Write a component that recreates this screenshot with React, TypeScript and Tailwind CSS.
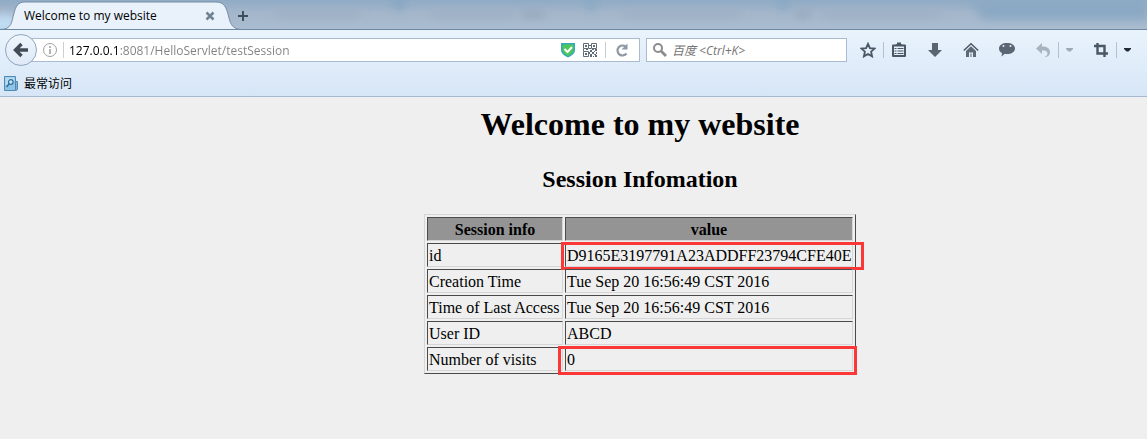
import { useState } from "react";
import type { ReactNode } from "react";

const sessionRows = [
  { label: "id", value: "D9165E3197791A23ADDFF23794CFE40E", mark: "wide" },
  { label: "Creation Time", value: "Tue Sep 20 16:56:49 CST 2016" },
  { label: "Time of Last Access", value: "Tue Sep 20 16:56:49 CST 2016" },
  { label: "User ID", value: "ABCD" },
  { label: "Number of visits", value: "0", mark: "cell" },
];

function Icon({ children }: { children: ReactNode }) {
  return (
    <svg viewBox="0 0 16 16" className="h-4 w-4 shrink-0" aria-hidden="true">
      {children}
    </svg>
  );
}

function ToolButton({
  label,
  children,
}: {
  label: string;
  children: ReactNode;
}) {
  return (
    <button type="button" aria-label={label} className="shrink-0">
      {children}
    </button>
  );
}

function Separator() {
  return <span className="h-4 w-px shrink-0 bg-[#b4c1ce]" />;
}

function Caret() {
  return (
    <svg viewBox="0 0 7 4" className="h-1 w-[7px]" aria-hidden="true">
      <path d="M0 0h7v1L4.5 3.5h-2L0 1z" fill="currentColor" />
    </svg>
  );
}

function TabStrip() {
  return (
    <div className="relative flex h-[30px] items-center overflow-hidden border-b border-[#6f879f] bg-linear-to-b from-[#8fabc5] via-[#a2b5ca] via-40% to-[#abbdd0]">
      <svg
        className="absolute inset-0 h-full w-full"
        aria-hidden="true"
      >
        <defs>
          <filter id="haze" x="-30%" y="-60%" width="160%" height="220%">
            <feGaussianBlur stdDeviation="4" />
          </filter>
        </defs>
        <g filter="url(#haze)">
          <ellipse cx="4" cy="24" rx="16" ry="10" fill="#bfdcf3" />
          <path d="M390 0h18l-9 12z" fill="#85a5c1" />
          <path d="M582 0h18l-9 12z" fill="#88a7c2" />
          <path d="M774 0h18l-9 12z" fill="#88a7c2" />
          <path d="M968 0h180v20H984z" fill="#8ba9c4" />
          <path d="M275 14h85M430 14h85M622 14h120M822 14h118" stroke="#9cadbf" strokeWidth="5" />
          <path d="M522 14h22M795 14h16" stroke="#95a7b9" strokeWidth="7" />
        </g>
      </svg>
      <svg
        viewBox="0 0 242 30"
        className="absolute top-0 left-0 h-[30px] w-[242px]"
        aria-hidden="true"
      >
        <path
          d="M0 29.5C12 29.5 11.5 22 14 13C16 6 18 2 25 2H216C224 2 226 7 228 14C230 22 231 29.5 242 29.5V30H0z"
          fill="#e9f2fb"
        />
        <path
          d="M0 29.5C12 29.5 11.5 22 14 13C16 6 18 2 25 2H216C224 2 226 7 228 14C230 22 231 29.5 242 29.5"
          fill="none"
          stroke="#768da4"
        />
      </svg>
      <div className="relative flex w-[237px] items-center pt-0.5 pr-[22px] pl-6">
        <span className="flex-1 text-xs whitespace-nowrap">
          Welcome to my website
        </span>
        <button type="button" aria-label="Close tab">
          <svg viewBox="0 0 10 10" className="h-2.5 w-2.5" aria-hidden="true">
            <path
              d="M1.5 1.5l7 7M8.5 1.5l-7 7"
              stroke="#718392"
              strokeWidth="2.5"
            />
          </svg>
        </button>
      </div>
      <button type="button" aria-label="New tab" className="relative pt-0.5">
        <svg viewBox="0 0 12 12" className="h-3 w-3" aria-hidden="true">
          <path d="M6 1v10M1 6h10" stroke="#3c4f5c" strokeWidth="2" />
        </svg>
      </button>
    </div>
  );
}

function AddressBar() {
  const [url, setUrl] = useState("127.0.0.1:8081/HelloServlet/testSession");

  return (
    <div className="flex min-w-0 flex-1 items-center">
      <button
        type="button"
        aria-label="Back"
        className="relative z-10 flex h-8 w-8 shrink-0 items-center justify-center rounded-full border border-[#8fa6bf] bg-linear-to-b from-[#eef5fc] to-[#dfeaf7]"
      >
        <svg viewBox="0 0 16 16" className="h-4 w-4" aria-hidden="true">
          <path
            d="M8.5 2L2.500 8l6 6M3 8h12"
            fill="none"
            stroke="#414c57"
            strokeWidth="3.4"
          />
        </svg>
      </button>
      <div className="-ml-2 flex h-6 min-w-0 flex-1 items-center border border-[#a9bbd0] bg-white pr-[9px] pl-3">
        <ToolButton label="Site information">
          <svg viewBox="0 0 16 16" className="h-4 w-4" aria-hidden="true">
            <circle cx="8" cy="8" r="6.5" fill="none" stroke="#a0a0a0" />
            <path d="M8 4v2M8 7v5" stroke="#9a9a9a" strokeWidth="1.5" />
          </svg>
        </ToolButton>
        <span className="mr-[5px] ml-[5px] h-4 w-px bg-[#cfcfcf]" />
        {/* host part is black, path is grey */}
        <input
          type="text"
          aria-label="Address"
          value={url}
          onChange={(event) => setUrl(event.target.value)}
          className="min-w-0 flex-1 bg-[linear-gradient(to_right,#000_51px,#808080_51px)] bg-clip-text pt-px text-xs text-transparent caret-black outline-none"
        />
        <div className="flex items-center gap-1.5">
          <ToolButton label="Site security">
            <Icon>
              <path
                d="M1 1h14v7c0 3.500-3 5.500-7 7.500C4 13.500 1 11.500 1 8z"
                fill="#35aabb"
              />
              <path
                d="M2.500 2.500h11V8c0 2.500-2.500 4.500-5.500 6-3-1.500-5.500-3.500-5.500-6z"
                fill="#4fc65a"
              />
              <path
                d="M4.500 7l3 3L12 5"
                fill="none"
                stroke="#fff"
                strokeWidth="2"
              />
            </Icon>
          </ToolButton>
          <ToolButton label="QR code">
            <Icon>
              <path
                d="M1.500 1.500h5v5h-5zM9.500 1.500h5v5h-5zM1.500 9.500h5v5h-5z"
                fill="none"
                stroke="#606c78"
              />
              <path
                d="M3 3h2v2H3zM11 3h2v2h-2zM3 11h2v2H3zM7 3h2v1H7zM7 6h2v1H7zM1 7h1v2H1zM4 7h2v1H4zM8 8h2v2H8zM10 7h2v1h-2zM13 7h2v2h-2zM7 10h1v2H7zM10 10h2v2h-2zM12 9h1v1h-1zM8 12h2v3H8zM12 12h2v1h-2zM14 10h1v2h-1zM11 14h1v1h-1zM13 13h2v2h-2z"
                fill="#606c78"
              />
            </Icon>
          </ToolButton>
        </div>
        <span className="mr-2 ml-[7px] h-4 w-px bg-[#c4ccd4]" />
        <ToolButton label="Reload">
          <Icon>
            <path
              d="M12.500 11.500A5 5 0 1 1 11.500 4.500"
              fill="none"
              stroke="#8e99a4"
              strokeWidth="2.2"
            />
            <path d="M13.500 1.500v6h-6z" fill="#8e99a4" />
          </Icon>
        </ToolButton>
      </div>
    </div>
  );
}

function SearchBox() {
  return (
    <div className="flex h-6 w-[201px] shrink-0 items-center gap-1 border border-[#a9bbd0] bg-white px-[5px]">
      <Icon>
        <circle
          cx="6"
          cy="6"
          r="4"
          fill="none"
          stroke="#8c8c8c"
          strokeWidth="2"
        />
        <path d="M9 9l5 5" stroke="#8c8c8c" strokeWidth="2.8" />
      </Icon>
      <input
        type="text"
        aria-label="Search"
        placeholder="百度 <Ctrl+K>"
        className="min-w-0 flex-1 pt-px text-xs italic outline-none placeholder:text-[#757575]"
      />
    </div>
  );
}

function ToolIcons() {
  return (
    <div className="ml-[7px] flex shrink-0 items-center gap-5 text-[#4a5764]">
      <div className="flex items-center gap-[7px]">
        <ToolButton label="Bookmark this page">
          <Icon>
            <path
              d="M8 1.800l1.900 4.300 4.700.4-3.500 3.200 1 4.700L8 12l-4.100 2.400 1-4.700L1.400 6.500l4.700-.4z"
              fill="none"
              stroke="currentColor"
              strokeWidth="1.8"
            />
          </Icon>
        </ToolButton>
        <Separator />
        <ToolButton label="Show bookmarks">
          <Icon>
            <path
              d="M2 3.500h12v10.500H2z"
              fill="none"
              stroke="currentColor"
              strokeWidth="2"
              strokeLinejoin="round"
            />
            <path d="M4 3l2-1V.5h4V2l2 1v1H4z" fill="currentColor" />
            <path
              d="M3.500 6.500h2M3.500 9h2M3.500 11.500h2M6.500 6.500h6M6.500 9h6M6.500 11.500h6"
              stroke="currentColor"
            />
          </Icon>
        </ToolButton>
      </div>
      <ToolButton label="Downloads">
        <Icon>
          <path d="M5 1h6v7h4l-7 7-7-7h4z" fill="#596672" />
        </Icon>
      </ToolButton>
      <ToolButton label="Home">
        <Icon>
          <path
            d="M.8 8.500L8 1.800l7.200 6.700"
            fill="none"
            stroke="currentColor"
            strokeWidth="1.5"
          />
          <path
            d="M3 9l5-4.700L13 9v6h-3v-4.500H9V15H7v-4.500H6V15H3z"
            fill="#5d6975"
          />
          <path d="M6.500 10.500h3V15h-3z" fill="#e2edf9" />
          <path d="M7.500 11.500h1V15h-1z" fill="#5d6975" />
        </Icon>
      </ToolButton>
      <ToolButton label="Chat">
        <Icon>
          <path
            d="M8 1c4.500 0 8 2 8 5.500S12.500 12 8 12c-.8 0-1.500 0-2.200-.2L2.500 14.500 3 11C1 10 0 8.500 0 6.500 0 3 3.500 1 8 1z"
            fill="#5a6673"
          />
          <circle cx="4.500" cy="4" r="1" fill="#e6f0fa" />
          <circle cx="11.500" cy="4" r="1" fill="#e6f0fa" />
        </Icon>
      </ToolButton>
      <div className="flex items-center gap-[7px] text-[#9faab6]">
        <ToolButton label="Undo close tab">
          <Icon>
            <path
              d="M1 6.500L7 1v3.500c5 0 8 2 8 5.500 0 3-2 5-5.500 5 2-1 3-2 3-3.500C12.500 9 10.500 8.500 7 8.500V12z"
              fill="#a9b3be"
            />
          </Icon>
        </ToolButton>
        <Separator />
        <ToolButton label="Recently closed tabs">
          <Caret />
        </ToolButton>
      </div>
      <div className="flex items-center gap-[7px]">
        <ToolButton label="Screenshot">
          <Icon>
            <path
              d="M1 4h10.500v11M4.500 1v10.500H15"
              fill="none"
              stroke="currentColor"
              strokeWidth="2.4"
            />
          </Icon>
        </ToolButton>
        <Separator />
        <ToolButton label="Screenshot options">
          <span className="block text-[#222b33]">
            <Caret />
          </span>
        </ToolButton>
      </div>
    </div>
  );
}

function BookmarksBar() {
  return (
    <div className="flex h-[26px] items-center px-1 pt-0.5">
      <a href="#most-visited" className="flex items-center gap-1 text-xs">
        <svg viewBox="0 0 16 16" className="h-4 w-4" aria-hidden="true">
          <path d="M.5.5h11v14H.5z" fill="#8fc4e6" stroke="#5289b3" />
          <path d="M12 5.500h1.500v8l-1.500 1z" fill="#b3dcf2" stroke="#5289b3" />
          <path d="M1.500 1.500h9v4l-9 4z" fill="#b8ddf3" />
          <circle
            cx="6.800"
            cy="6"
            r="2.300"
            fill="#c9e6f7"
            stroke="#2f6f9e"
            strokeWidth="1.2"
          />
          <path d="M5 8l-2.500 3" stroke="#2f6f9e" strokeWidth="1.6" />
        </svg>
        最常访问
      </a>
    </div>
  );
}

function SessionTable() {
  return (
    <table className="w-[432px] table-fixed border-separate border-spacing-[2px] border border-t-[#d6d6d6] border-r-[#4a4a4a] border-b-[#4a4a4a] border-l-[#d6d6d6] text-base leading-5">
      <thead>
        <tr className="bg-[#949494]">
          <th className="w-[136px] border border-t-[#4a4a4a] border-r-[#d6d6d6] border-b-[#d6d6d6] border-l-[#4a4a4a] px-px pt-0.5">
            Session info
          </th>
          <th className="border border-t-[#4a4a4a] border-r-[#d6d6d6] border-b-[#d6d6d6] border-l-[#4a4a4a] px-px pt-0.5">
            value
          </th>
        </tr>
      </thead>
      <tbody>
        {sessionRows.map((row) => (
          <tr key={row.label}>
            <td className="border border-t-[#4a4a4a] border-r-[#d6d6d6] border-b-[#d6d6d6] border-l-[#4a4a4a] px-px pt-0.5 whitespace-nowrap">
              {row.label}
            </td>
            <td className="relative border border-t-[#4a4a4a] border-r-[#d6d6d6] border-b-[#d6d6d6] border-l-[#4a4a4a] px-px pt-0.5 whitespace-nowrap">
              {row.value}
              {row.mark === "wide" ? (
                <span className="absolute -top-0.5 -right-3 -bottom-1 -left-[5px] border-3 border-[#fc3737]" />
              ) : null}
              {row.mark === "cell" ? (
                <span className="absolute -top-0.5 -right-[5px] -bottom-[5px] -left-2 border-3 border-[#fc3737]" />
              ) : null}
            </td>
          </tr>
        ))}
      </tbody>
    </table>
  );
}

export default function App() {
  return (
    <div className="min-h-screen bg-[#efefef] text-black">
      <header className="font-['Open_Sans','Noto_Sans_CJK_SC',sans-serif]">
        <TabStrip />
        <div className="border-b border-[#a5bad2] bg-linear-to-b from-[#e9f3fc] to-[#d7e6f7]">
          <div className="flex h-10 items-center gap-1.5 pr-4 pl-[5px]">
            <AddressBar />
            <SearchBox />
            <ToolIcons />
          </div>
          <BookmarksBar />
        </div>
      </header>
      <main className="flex flex-col items-center overflow-hidden pt-[9px] pb-16 pl-[133px] font-['Liberation_Serif',serif]">
        <h1 className="text-[32px] leading-9 font-bold">
          Welcome to my website
        </h1>
        <h2 className="mt-[23px] mb-[21px] text-2xl leading-7 font-bold">
          Session Infomation
        </h2>
        <SessionTable />
      </main>
    </div>
  );
}
